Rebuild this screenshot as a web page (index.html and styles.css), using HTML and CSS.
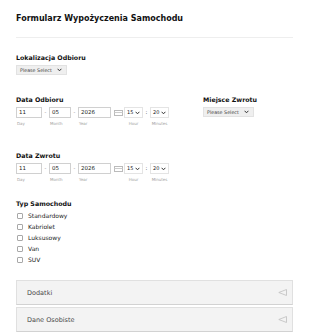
FILE: index.html
```html
<!DOCTYPE html>
<html>
<head>
<meta charset="utf-8">
<link rel="stylesheet" href="styles.css">
</head>
<body>
<div class="form">
  <h1 class="title">Formularz Wypożyczenia Samochodu</h1>
  <hr class="divider">

  <div class="field first">
    <div class="label">Lokalizacja Odbioru</div>
    <div class="select">Please Select <svg class="chev" width="5" height="4" viewBox="0 0 5 4"><path d="M0.6 0.8 L2.5 2.8 L4.4 0.8" fill="none" stroke="#333" stroke-width="1"/></svg></div>
  </div>

  <div class="row">
    <div class="field date-field">
      <div class="label">Data Odbioru</div>
      <div class="date-row">
        <div class="part"><div class="inp w-day">11</div><div class="sub">Day</div></div>
        <span class="sep">-</span>
        <div class="part"><div class="inp w-mon">05</div><div class="sub">Month</div></div>
        <span class="sep">-</span>
        <div class="part"><div class="inp w-year">2026</div><div class="sub">Year</div></div>
        <svg class="cal" width="9" height="6" viewBox="0 0 9 6"><rect x="0.5" y="0.5" width="8" height="5" fill="#fff" stroke="#bbb" stroke-width="1"/><line x1="0.5" y1="2.5" x2="8.5" y2="2.5" stroke="#ccc" stroke-width="1"/></svg>
        <div class="part"><div class="sel-sm">15 <svg class="chev" width="5" height="4" viewBox="0 0 5 4"><path d="M0.6 0.8 L2.5 2.8 L4.4 0.8" fill="none" stroke="#333" stroke-width="1"/></svg></div><div class="sub c">Hour</div></div>
        <span class="colon">:</span>
        <div class="part"><div class="sel-sm">20 <svg class="chev" width="5" height="4" viewBox="0 0 5 4"><path d="M0.6 0.8 L2.5 2.8 L4.4 0.8" fill="none" stroke="#333" stroke-width="1"/></svg></div><div class="sub c">Minutes</div></div>
      </div>
    </div>
    <div class="field return-field">
      <div class="label">Miejsce Zwrotu</div>
      <div class="select">Please Select <svg class="chev" width="5" height="4" viewBox="0 0 5 4"><path d="M0.6 0.8 L2.5 2.8 L4.4 0.8" fill="none" stroke="#333" stroke-width="1"/></svg></div>
    </div>
  </div>

  <div class="field date-field second">
    <div class="label">Data Zwrotu</div>
    <div class="date-row">
      <div class="part"><div class="inp w-day">11</div><div class="sub">Day</div></div>
      <span class="sep">-</span>
      <div class="part"><div class="inp w-mon">05</div><div class="sub">Month</div></div>
      <span class="sep">-</span>
      <div class="part"><div class="inp w-year">2026</div><div class="sub">Year</div></div>
      <svg class="cal" width="9" height="6" viewBox="0 0 9 6"><rect x="0.5" y="0.5" width="8" height="5" fill="#fff" stroke="#bbb" stroke-width="1"/><line x1="0.5" y1="2.5" x2="8.5" y2="2.5" stroke="#ccc" stroke-width="1"/></svg>
      <div class="part"><div class="sel-sm">15 <svg class="chev" width="5" height="4" viewBox="0 0 5 4"><path d="M0.6 0.8 L2.5 2.8 L4.4 0.8" fill="none" stroke="#333" stroke-width="1"/></svg></div><div class="sub c">Hour</div></div>
      <span class="colon">:</span>
      <div class="part"><div class="sel-sm">20 <svg class="chev" width="5" height="4" viewBox="0 0 5 4"><path d="M0.6 0.8 L2.5 2.8 L4.4 0.8" fill="none" stroke="#333" stroke-width="1"/></svg></div><div class="sub c">Minutes</div></div>
    </div>
  </div>

  <div class="field types">
    <div class="label">Typ Samochodu</div>
    <div class="checks">
      <div class="check"><span class="box"></span>Standardowy</div>
      <div class="check"><span class="box"></span>Kabriolet</div>
      <div class="check"><span class="box"></span>Luksusowy</div>
      <div class="check"><span class="box"></span>Van</div>
      <div class="check"><span class="box"></span>SUV</div>
    </div>
  </div>

  <div class="sections">
    <div class="section">Dodatki <svg class="tri" width="9" height="7" viewBox="0 0 9 7"><path d="M8.5 0.5 L0.8 3.5 L8.5 6.5 Z" fill="none" stroke="#c4c4c4" stroke-width="0.9"/></svg></div>
    <div class="section">Dane Osobiste <svg class="tri" width="9" height="7" viewBox="0 0 9 7"><path d="M8.5 0.5 L0.8 3.5 L8.5 6.5 Z" fill="none" stroke="#c4c4c4" stroke-width="0.9"/></svg></div>
  </div>
</div>
</body>
</html>
```

FILE: styles.css
```css
html, body {
  margin: 0;
  padding: 0;
  background: #fff;
}
body {
  font-family: "DejaVu Sans", Verdana, sans-serif;
  color: #111;
}
.form {
  width: 277px;
  padding: 13px 0 0 16px;
}
.title {
  margin: 0;
  font-size: 8px;
  font-weight: bold;
  line-height: 11px;
  color: #111;
}
.divider {
  margin: 13px 0 0 0;
  border: 0;
  border-top: 1px solid #eeeeee;
  height: 0;
}
.field.first {
  margin-top: 16px;
}
.label {
  font-size: 6.3px;
  font-weight: bold;
  line-height: 8px;
  color: #111;
}
.select {
  margin-top: 3px;
  display: flex;
  align-items: center;
  justify-content: space-between;
  width: 51px;
  height: 10px;
  box-sizing: border-box;
  padding: 0 4px 0 3px;
  background: #efefef;
  border: 1px solid #e2e2e2;
  font-size: 4.8px;
  color: #444;
}
.chev {
  display: block;
}
.row {
  display: flex;
  margin-top: 21px;
}
.return-field {
  margin-left: 34px;
}
.return-field .select {
  margin-top: 3px;
}
.date-row {
  margin-top: 3px;
  display: flex;
  align-items: flex-start;
}
.part {
  display: flex;
  flex-direction: column;
}
.inp {
  height: 11px;
  box-sizing: border-box;
  border: 1px solid #d0d0d0;
  font-size: 5.5px;
  line-height: 9px;
  padding-left: 2px;
  color: #222;
  background: #fff;
}
.w-day { width: 26px; }
.w-mon { width: 22px; }
.w-year { width: 33px; }
.sub {
  margin-top: 3px;
  font-size: 4px;
  color: #a0a0a0;
  line-height: 5px;
  padding-left: 1px;
}
.sub.c {
  text-align: center;
  padding-left: 0;
}
.sep {
  width: 7px;
  text-align: center;
  font-size: 5px;
  line-height: 11px;
  color: #888;
}
.cal {
  display: block;
  margin: 3px 1px 0 3px;
}
.sel-sm {
  width: 19px;
  height: 11px;
  box-sizing: border-box;
  border: 1px solid #e4e4e4;
  font-size: 5px;
  line-height: 9px;
  padding: 0 2px 0 2px;
  color: #222;
  display: flex;
  align-items: center;
  justify-content: space-between;
}
.colon {
  width: 7px;
  text-align: center;
  font-size: 5.5px;
  line-height: 11px;
  color: #333;
}
.date-field.second {
  margin-top: 26px;
}
.types {
  margin-top: 18px;
}
.checks {
  margin-top: 2px;
}
.check {
  display: flex;
  align-items: center;
  height: 11px;
  font-size: 6px;
  color: #222;
}
.box {
  width: 4px;
  height: 4px;
  border: 1px solid #a8a8a8;
  border-radius: 1px;
  margin: 0 5px 0 1px;
  background: #fff;
}
.sections {
  margin-top: 15px;
}
.section {
  height: 25px;
  box-sizing: border-box;
  background: #f3f3f3;
  border: 1px solid #e0e0e0;
  border-bottom-color: #d2d2d2;
  display: flex;
  align-items: center;
  justify-content: space-between;
  padding: 0 5px 0 10px;
  font-size: 6.5px;
  color: #4a4a4a;
  margin-bottom: 2px;
}
```
